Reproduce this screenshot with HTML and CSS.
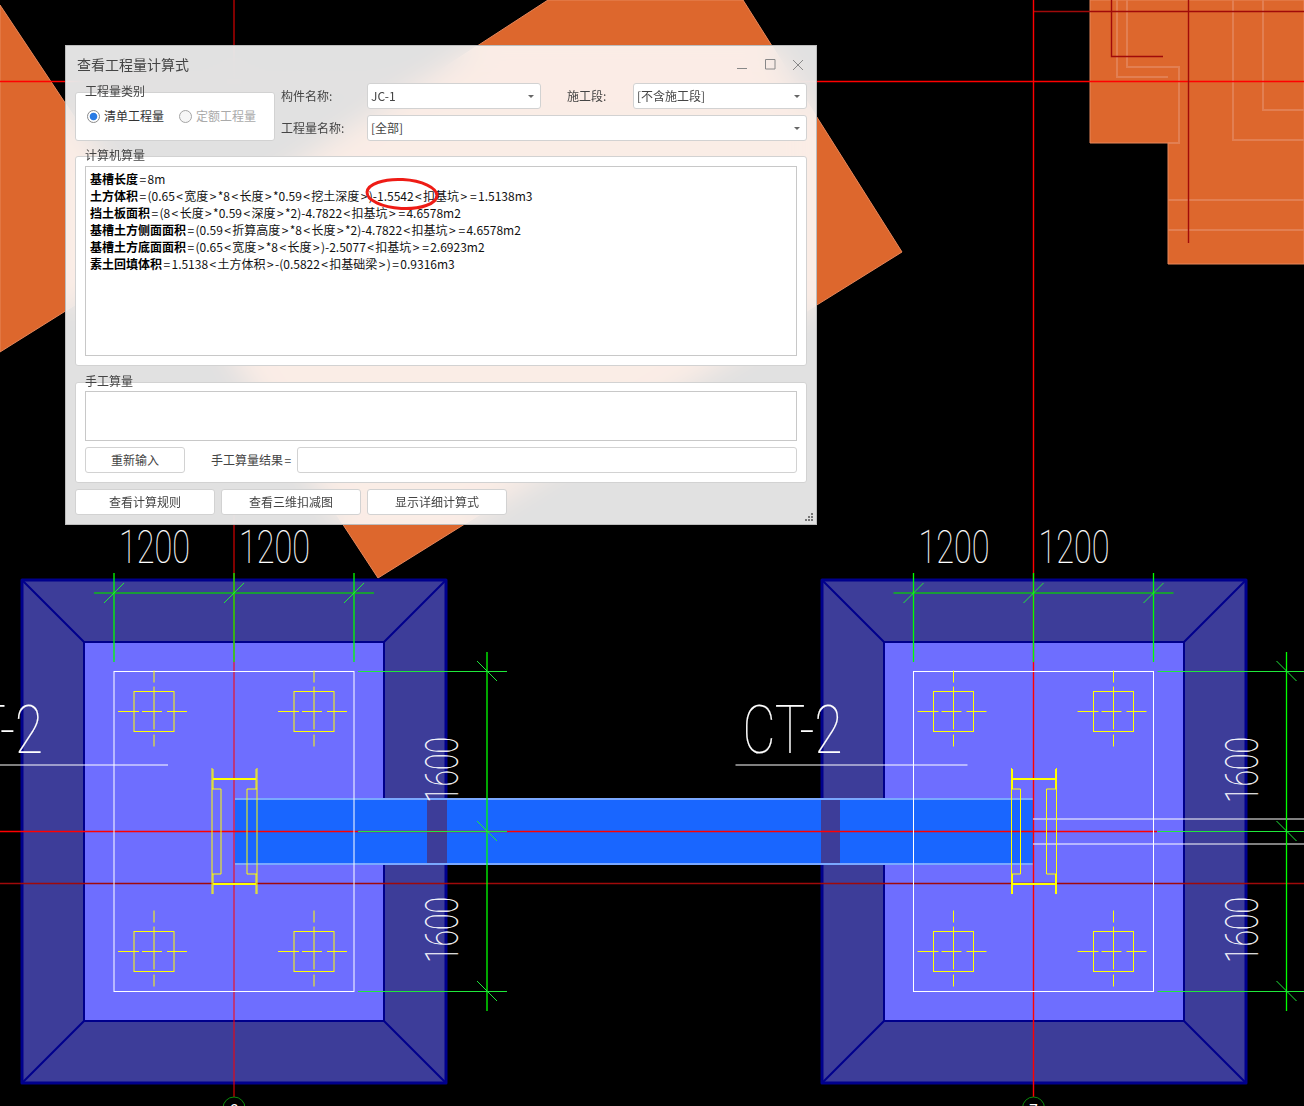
FILE: index.html
```html
<!DOCTYPE html>
<html lang="zh-CN">
<head>
<meta charset="utf-8">
<title>查看工程量计算式</title>
<link rel="stylesheet" href="styles.css">
</head>
<body>
<div class="canvas">
  <svg class="cad" width="1304" height="1106" viewBox="0 0 1304 1106" xmlns="http://www.w3.org/2000/svg">
    <defs>
      <g id="footing">
        <rect class="f-outer" x="22" y="580" width="424" height="503"/>
        <path class="f-diag" d="M22 580L84 642M446 580L384 642M22 1083L84 1021M446 1083L384 1021"/>
        <rect class="f-inner" x="84" y="642" width="300" height="379"/>
      </g>
      <g id="cross">
        <rect class="yel" x="-20" y="-20" width="40" height="40"/>
        <path class="yel" d="M-36 0H-15M-12 0H8M13 0H33M0 -41V-29M0 -25V18M0 23V35"/>
      </g>
      <g id="plan">
        <rect class="wht" x="114" y="671.5" width="240" height="320"/>
        <path class="wht" d="M-64 765H168"/>
        <use href="#cross" x="154" y="711.5"/>
        <use href="#cross" x="314" y="711.5"/>
        <use href="#cross" x="154" y="951.5"/>
        <use href="#cross" x="314" y="951.5"/>
        <path class="yel" d="M212 768V894M213 769V789M213 874V894M212 789H221V874H212M257 768V894M256 769V789M256 874V894M257 789H247V874H257"/>
        <path class="yel-bar" d="M213 779H256M213 884H256"/>
        <path class="grn-dim" d="M94 593H374"/>
        <path class="grn" d="M114 573V662M234 573V662M354 573V662M487 652V1011"/>
        <path class="grn-thin" d="M104 603L124 583M224 603L244 583M344 603L364 583M477 661L497 681M477 821L497 841M477 981L497 1001M358 671.5H507M358 831.5H507M358 991.5H507"/>
        <text class="dim" x="119" y="563" textLength="71" lengthAdjust="spacingAndGlyphs">1200</text>
        <text class="dim" x="239" y="563" textLength="71" lengthAdjust="spacingAndGlyphs">1200</text>
        <text class="dim" transform="translate(458 803) rotate(-90)" textLength="66" lengthAdjust="spacingAndGlyphs">1600</text>
        <text class="dim" transform="translate(458 963) rotate(-90)" textLength="66" lengthAdjust="spacingAndGlyphs">1600</text>
        <text class="dim big" x="-57" y="753" textLength="100" lengthAdjust="spacingAndGlyphs">CT-2</text>
      </g>
    </defs>

    <path class="org" d="M0 5L163 250L0 352Z"/>
    <path class="org" d="M163 250L548 0H743L902 252L378 578Z"/>
    <path class="org" d="M1304 0H1090V143H1168V264H1304Z"/>
    <path class="org-line" d="M1117 0V77H1168M1127 0V67H1179V143H1168M1168 200H1304M1168 230H1304M1233 0V140H1304M1263 0V110H1304"/>

    <path class="red" d="M0 81.5H1304"/>
    <path class="dkred" d="M1034 11.5H1304M1188.5 0V243M1111.5 0V56.5H1163"/>

    <use href="#footing"/>
    <use href="#footing" x="800"/>

    <rect class="beam" x="235" y="799" width="798" height="65"/>
    <rect class="patch" x="427" y="800" width="20" height="63"/>
    <rect class="patch" x="821" y="800" width="19" height="63"/>
    <path class="beam-edge" d="M235 799H1033M235 864H1033"/>

    <path class="red-soft" d="M234 0V1097"/>
    <path class="red" d="M1033.5 0V1097M0 831.5H1157"/>
    <path class="dkred" d="M0 883.5H1304"/>
    <path class="wht" d="M1033 819H1304M1033 844H1304"/>

    <use href="#plan"/>
    <use href="#plan" x="799.5"/>

    <circle class="axis" cx="234" cy="1108" r="11"/>
    <circle class="axis" cx="1033.5" cy="1108" r="11"/>
    <text class="axis-text" x="234" y="1116">6</text>
    <text class="axis-text" x="1033.5" y="1116">7</text>
  </svg>

  <section class="dialog">
    <header class="title-bar">
      <h1 class="title">查看工程量计算式</h1>
      <svg class="win-ctrl" width="66" height="12" viewBox="0 0 66 12" xmlns="http://www.w3.org/2000/svg">
        <path d="M0 9.5H10M28.5 .5H38V10H28.5ZM56 1L66 11M66 1L56 11"/>
      </svg>
    </header>

    <div class="top-row">
      <div class="group group-type">
        <span class="legend">工程量类别</span>
        <div class="radios">
          <label class="radio-item"><span class="radio on"></span>清单工程量</label>
          <label class="radio-item off"><span class="radio"></span>定额工程量</label>
        </div>
      </div>
      <div class="form-grid">
        <span class="lbl">构件名称:</span>
        <div class="combo">JC-1</div>
        <span class="lbl lbl-stage">施工段:</span>
        <div class="combo">[不含施工段]</div>
        <span class="lbl">工程量名称:</span>
        <div class="combo combo-wide">[全部]</div>
      </div>
    </div>

    <div class="group group-auto">
      <span class="legend">计算机算量</span>
      <div class="box box-auto">
        <p class="ln"><b>基槽长度</b><span class="op">=</span>8m</p>
        <p class="ln"><b>土方体积</b><span class="op">=</span>(0.65<span class="op">&lt;</span>宽度<span class="op">&gt;</span>*8<span class="op">&lt;</span>长度<span class="op">&gt;</span>*0.59<span class="op">&lt;</span>挖土深度<span class="op">&gt;</span>)-1.5542<span class="op">&lt;</span>扣基坑<span class="op">&gt;</span><span class="op">=</span>1.5138m3</p>
        <p class="ln"><b>挡土板面积</b><span class="op">=</span>(8<span class="op">&lt;</span>长度<span class="op">&gt;</span>*0.59<span class="op">&lt;</span>深度<span class="op">&gt;</span>*2)-4.7822<span class="op">&lt;</span>扣基坑<span class="op">&gt;</span><span class="op">=</span>4.6578m2</p>
        <p class="ln"><b>基槽土方侧面面积</b><span class="op">=</span>(0.59<span class="op">&lt;</span>折算高度<span class="op">&gt;</span>*8<span class="op">&lt;</span>长度<span class="op">&gt;</span>*2)-4.7822<span class="op">&lt;</span>扣基坑<span class="op">&gt;</span><span class="op">=</span>4.6578m2</p>
        <p class="ln"><b>基槽土方底面面积</b><span class="op">=</span>(0.65<span class="op">&lt;</span>宽度<span class="op">&gt;</span>*8<span class="op">&lt;</span>长度<span class="op">&gt;</span>)-2.5077<span class="op">&lt;</span>扣基坑<span class="op">&gt;</span><span class="op">=</span>2.6923m2</p>
        <p class="ln"><b>素土回填体积</b><span class="op">=</span>1.5138<span class="op">&lt;</span>土方体积<span class="op">&gt;</span>-(0.5822<span class="op">&lt;</span>扣基础梁<span class="op">&gt;</span>)<span class="op">=</span>0.9316m3</p>
      </div>
    </div>

    <div class="group group-manual">
      <span class="legend">手工算量</span>
      <div class="box box-manual"></div>
      <div class="manual-row">
        <button class="btn btn-reset" type="button">重新输入</button>
        <span class="lbl lbl-result">手工算量结果<span class="op">=</span></span>
        <div class="result-input"></div>
      </div>
    </div>

    <div class="btn-row">
      <button class="btn btn-main" type="button">查看计算规则</button>
      <button class="btn btn-main" type="button">查看三维扣减图</button>
      <button class="btn btn-main" type="button">显示详细计算式</button>
    </div>

    <svg class="ink" width="76" height="36" viewBox="0 0 76 36" xmlns="http://www.w3.org/2000/svg">
      <ellipse cx="38" cy="18" rx="35" ry="14.5" transform="rotate(3 38 18)"/>
    </svg>
    <svg class="grip" width="8" height="8" viewBox="0 0 8 8" xmlns="http://www.w3.org/2000/svg">
      <path d="M6 0h2v2H6zM3 3h2v2H3zM6 3h2v2H6zM0 6h2v2H0zM3 6h2v2H3zM6 6h2v2H6z"/>
    </svg>
  </section>
</div>
</body>
</html>
```

FILE: styles.css
```css
* { box-sizing: border-box; }
html, body { margin: 0; padding: 0; background: #000; }
.canvas { position: relative; width: 1304px; height: 1106px; overflow: hidden; background: #000; }
.cad { display: block; }

/* CAD drawing */
.org { fill: #dd672d; stroke: #e8875a; stroke-width: 1; }
.org-line { fill: none; stroke: #e27f52; stroke-width: 2; }
.red { fill: none; stroke: #f00; stroke-width: 1.4; }
.red-soft { fill: none; stroke: #f00; stroke-width: 1; }
.dkred { fill: none; stroke: #a00a0a; stroke-width: 1.4; }
.f-outer { fill: #3d3d99; stroke: #00008c; stroke-width: 3; stroke-linejoin: round; }
.f-inner { fill: #6e6eff; stroke: #00008c; stroke-width: 2; }
.f-diag { fill: none; stroke: #00008c; stroke-width: 2; }
.beam { fill: #1966ff; }
.patch { fill: #3d3d99; }
.beam-edge { fill: none; stroke: #7aa8ff; stroke-width: 2; }
.wht { fill: none; stroke: #fff; stroke-width: 1; }
.yel { fill: none; stroke: #ff0; stroke-width: 1; }
.yel-bar { fill: none; stroke: #ff0; stroke-width: 2; }
.grn { fill: none; stroke: #0f0; stroke-width: 1.3; }
.grn-thin { fill: none; stroke: #1fe83a; stroke-width: 1; }
.grn-dim { fill: none; stroke: #1a9a3a; stroke-width: 2; }
.dim { fill: #fff; stroke: #fff; stroke-width: .12; font-family: "Roboto", "Lato", sans-serif; font-weight: 100; font-size: 46px; }
.big { font-size: 66px; }
.axis { fill: none; stroke: #0a8a0a; stroke-width: 1; }
.axis-text { fill: #fff; font-family: "Liberation Sans", sans-serif; font-size: 16px; text-anchor: middle; }

/* Dialog */
.dialog {
  position: absolute; left: 65px; top: 45px; width: 752px; height: 480px;
  padding: 0 9px;
  border: 1px solid #bdbdbd;
  background: rgba(254, 254, 254, .885);
  backdrop-filter: blur(14px);
  color: #444;
  font-family: "Noto Sans CJK SC", "Noto Sans", sans-serif;
  font-size: 12px;
  line-height: 18px;
}
.title-bar { display: flex; align-items: center; justify-content: space-between; height: 37px; padding: 0 4px 0 2px; }
.title { margin: 0; font-size: 14px; font-weight: 400; color: #444; line-height: 20px; position: relative; top: -1px; }
.win-ctrl { position: relative; top: 0; }
.win-ctrl path { fill: none; stroke: #888; stroke-width: 1; }

.top-row { display: flex; gap: 6px; }
.group { position: relative; background: #fff; border: 1px solid #d2d2d2; border-radius: 3px; }
.legend { position: absolute; left: 9px; top: -11px; white-space: nowrap; }
.group-type { width: 200px; height: 49px; margin-top: 9px; padding: 16px 11px 0; }
.radios { display: flex; }
.radio-item { display: flex; align-items: center; gap: 4px; flex: none; width: 92px; height: 14px; color: #333; white-space: nowrap; }
.radio-item.off { color: #aaa; }
.radio { width: 13px; height: 13px; border-radius: 50%; border: 1px solid #a5a5a5; background: #f6f6f6; flex: none; }
.radio.on { background: radial-gradient(circle, #2a7be4 0, #2a7be4 3.4px, #fff 4.2px); border-color: #8a8a8a; }

.form-grid { display: grid; grid-template-columns: 86px 174px 26px 66px 174px; grid-auto-rows: 26px; row-gap: 6px; align-items: center; }
.lbl { white-space: nowrap; color: #444; }
.lbl-stage { grid-column: 4; }
.combo {
  position: relative; height: 26px; padding: 0 3px; background: #fff;
  border: 1px solid #d2d2d2; border-radius: 3px; line-height: 23px; color: #444;
}
.combo::after {
  content: ""; position: absolute; right: 6px; top: 11px;
  border-left: 3px solid transparent; border-right: 3px solid transparent; border-top: 3px solid #666;
}
.combo-wide { grid-column: 2 / 6; }

.group-auto { height: 210px; margin-top: 15px; padding: 9px; }
.box { background: #fff; border: 1px solid #c8c8c8; }
.box-auto { height: 190px; padding: 3px 4px; color: #111; }
.ln { margin: 0; line-height: 17px; white-space: nowrap; }
.ln b { font-weight: 700; color: #000; }
.op { padding: 0 1.4px; }

.group-manual { height: 101px; margin-top: 16px; padding: 8px 9px 0; }
.box-manual { height: 50px; }
.manual-row { display: flex; align-items: center; margin-top: 6px; }
.btn {
  height: 26px; padding: 0; background: #fff; color: #444;
  border: 1px solid #d2d2d2; border-radius: 3px;
  font: inherit; line-height: 24px; text-align: center;
}
.btn-reset { width: 100px; }
.lbl-result { width: 86px; margin-left: 26px; }
.result-input { flex: 1; height: 26px; background: #fff; border: 1px solid #d2d2d2; border-radius: 3px; }
.btn-row { display: flex; gap: 6px; margin-top: 6px; }
.btn-main { width: 140px; }

.ink { position: absolute; left: 298px; top: 130px; }
.ink ellipse { fill: none; stroke: #ee1c16; stroke-width: 3; }
.grip { position: absolute; right: 3px; bottom: 3px; }
.grip path { fill: #777; }
```
